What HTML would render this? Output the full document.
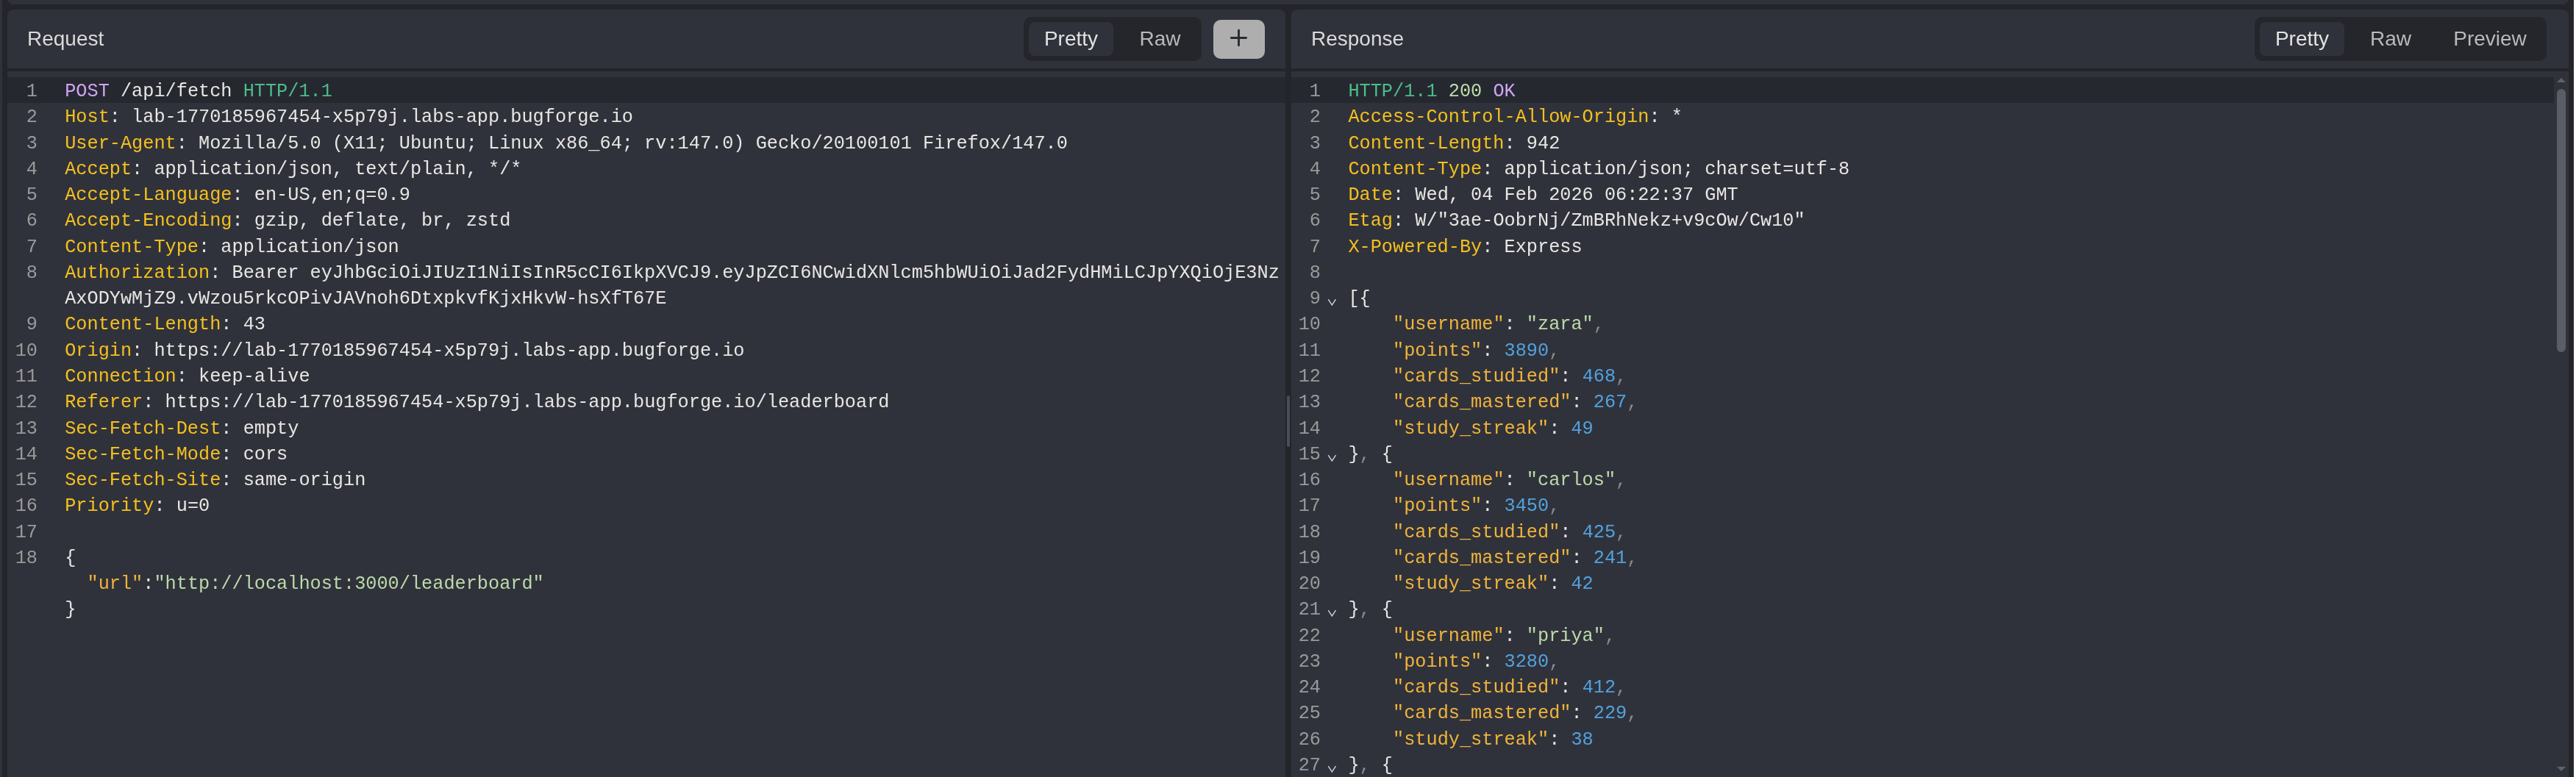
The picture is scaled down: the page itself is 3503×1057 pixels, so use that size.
<!DOCTYPE html>
<html><head><meta charset="utf-8"><style>
html,body{margin:0;padding:0}
body{-webkit-font-smoothing:antialiased;width:3503px;height:1057px;background:#24252a;position:relative;overflow:hidden;font-family:"Liberation Sans",sans-serif}
.a{position:absolute}
#lstrip{left:0;top:0;width:3px;height:1057px;background:#30323b}
#tstrip{left:10px;top:-20px;width:3483px;height:26px;background:#30323b;border-radius:8px}
#rwhite{left:3500px;top:0;width:3px;height:1057px;background:#fff}
.panel{position:absolute;top:13px;height:1200px;background:#30323b;border-radius:8px 8px 0 0;overflow:hidden}
#req{left:10px;width:1738px}
#res{left:1756px;width:1737px}
.sepl{position:absolute;left:0;right:0;top:80px;height:4px;background:#24252a}
.title{will-change:transform;position:absolute;top:19.75px;font-size:28px;line-height:40px;color:#d9d9d9;white-space:nowrap}
.tabs{position:absolute;top:10px;height:60px;background:#25262b;border-radius:10px}
.tab{will-change:transform;position:absolute;top:7px;height:46px;border-radius:8px;font-size:28px;line-height:46px;color:#b9b9b9;white-space:nowrap}
.tab.act{background:#30323b;color:#e2e2e2}
.plus{position:absolute;left:1640px;top:14px;width:70px;height:53px;background:#aeaeae;border-radius:10px}
.ln{will-change:transform;position:absolute;left:0;right:0;height:35.27px;line-height:35.27px;font-family:"Liberation Mono",monospace;font-size:25.26px;white-space:pre}
.hlbg{background:#262830}
#req .ln{right:0}
#res .ln{right:20px}
.num{position:absolute;left:0;top:2px;width:41px;text-align:right;color:#9a9a9a}
#res .num{width:40px}
.code{position:absolute;top:2px;left:78.2px}
#res .code{left:77.4px}
.fold{position:absolute;left:48px;top:18px}
.hn{color:#f4c01e} .v{color:#e8e6e3} .po{color:#cfa5f3} .ht{color:#4cbd8a}
.n2{color:#bfdcab} .ok{color:#d0a6f5} .k{color:#f0b43a} .s{color:#bcdaaa} .nu{color:#52a2de} .cm{color:#8a8a8a}
.sbthumb{position:absolute;left:1721px;top:108px;width:12px;height:358px;background:#5a5d66;border-radius:6px}
.tri{position:absolute;width:0;height:0;border-left:6.5px solid transparent;border-right:6.5px solid transparent}
</style></head><body>
<div class="a" id="lstrip"></div>
<div class="a" id="tstrip"></div>
<div class="a" id="rwhite"></div>
<div class="a" style="left:1750px;top:538px;width:4px;height:70px;border-radius:2px;background:#4a4d56"></div>
<div class="panel" id="req">
  <div class="title" style="left:27.4px">Request</div>
  <div class="tabs" style="left:1382px;width:242px">
    <div class="tab act" style="left:7px;width:115px;text-align:center">Pretty</div>
    <div class="tab" style="left:133px;width:105px;text-align:center">Raw</div>
  </div>
  <div class="plus"><svg width="70" height="53" viewBox="0 0 70 53"><path d="M34.5 14.2V34.8M24.3 24.5H44.6" stroke="#2a2b30" stroke-width="2.9" stroke-linecap="round" fill="none"/></svg></div>
  <div class="sepl"></div>
<div class="ln hlbg" style="top:92.00px"><span class="num">1</span><span class="code"><span class="po">POST</span><span class="v"> /api/fetch </span><span class="ht">HTTP/1.1</span></span></div>
<div class="ln" style="top:127.27px"><span class="num">2</span><span class="code"><span class="hn">Host</span><span class="v">: lab-1770185967454-x5p79j.labs-app.bugforge.io</span></span></div>
<div class="ln" style="top:162.54px"><span class="num">3</span><span class="code"><span class="hn">User-Agent</span><span class="v">: Mozilla/5.0 (X11; Ubuntu; Linux x86_64; rv:147.0) Gecko/20100101 Firefox/147.0</span></span></div>
<div class="ln" style="top:197.81px"><span class="num">4</span><span class="code"><span class="hn">Accept</span><span class="v">: application/json, text/plain, */*</span></span></div>
<div class="ln" style="top:233.08px"><span class="num">5</span><span class="code"><span class="hn">Accept-Language</span><span class="v">: en-US,en;q=0.9</span></span></div>
<div class="ln" style="top:268.35px"><span class="num">6</span><span class="code"><span class="hn">Accept-Encoding</span><span class="v">: gzip, deflate, br, zstd</span></span></div>
<div class="ln" style="top:303.62px"><span class="num">7</span><span class="code"><span class="hn">Content-Type</span><span class="v">: application/json</span></span></div>
<div class="ln" style="top:338.89px"><span class="num">8</span><span class="code"><span class="hn">Authorization</span><span class="v">: Bearer eyJhbGciOiJIUzI1NiIsInR5cCI6IkpXVCJ9.eyJpZCI6NCwidXNlcm5hbWUiOiJad2FydHMiLCJpYXQiOjE3Nz</span></span></div>
<div class="ln" style="top:374.16px"><span class="code"><span class="v">AxODYwMjZ9.vWzou5rkcOPivJAVnoh6DtxpkvfKjxHkvW-hsXfT67E</span></span></div>
<div class="ln" style="top:409.43px"><span class="num">9</span><span class="code"><span class="hn">Content-Length</span><span class="v">: 43</span></span></div>
<div class="ln" style="top:444.70px"><span class="num">10</span><span class="code"><span class="hn">Origin</span><span class="v">: https://lab-1770185967454-x5p79j.labs-app.bugforge.io</span></span></div>
<div class="ln" style="top:479.97px"><span class="num">11</span><span class="code"><span class="hn">Connection</span><span class="v">: keep-alive</span></span></div>
<div class="ln" style="top:515.24px"><span class="num">12</span><span class="code"><span class="hn">Referer</span><span class="v">: https://lab-1770185967454-x5p79j.labs-app.bugforge.io/leaderboard</span></span></div>
<div class="ln" style="top:550.51px"><span class="num">13</span><span class="code"><span class="hn">Sec-Fetch-Dest</span><span class="v">: empty</span></span></div>
<div class="ln" style="top:585.78px"><span class="num">14</span><span class="code"><span class="hn">Sec-Fetch-Mode</span><span class="v">: cors</span></span></div>
<div class="ln" style="top:621.05px"><span class="num">15</span><span class="code"><span class="hn">Sec-Fetch-Site</span><span class="v">: same-origin</span></span></div>
<div class="ln" style="top:656.32px"><span class="num">16</span><span class="code"><span class="hn">Priority</span><span class="v">: u=0</span></span></div>
<div class="ln" style="top:691.59px"><span class="num">17</span><span class="code"></span></div>
<div class="ln" style="top:726.86px"><span class="num">18</span><span class="code"><span class="v">{</span></span></div>
<div class="ln" style="top:762.13px"><span class="code"><span class="v">  </span><span class="k">"url"</span><span class="v">:</span><span class="s">"http://localhost:3000/leaderboard"</span></span></div>
<div class="ln" style="top:797.40px"><span class="code"><span class="v">}</span></span></div>
</div>
<div class="panel" id="res">
  <div class="title" style="left:27.4px">Response</div>
  <div class="tabs" style="left:1310px;width:397px">
    <div class="tab act" style="left:7px;width:115px;text-align:center">Pretty</div>
    <div class="tab" style="left:130px;width:110px;text-align:center">Raw</div>
    <div class="tab" style="left:245px;width:150px;text-align:center">Preview</div>
  </div>
  <div class="sepl"></div>
<div class="ln hlbg" style="top:92.00px"><span class="num">1</span><span class="code"><span class="ht">HTTP/1.1</span><span class="v"> </span><span class="n2">200</span><span class="v"> </span><span class="ok">OK</span></span></div>
<div class="ln" style="top:127.27px"><span class="num">2</span><span class="code"><span class="hn">Access-Control-Allow-Origin</span><span class="v">: *</span></span></div>
<div class="ln" style="top:162.54px"><span class="num">3</span><span class="code"><span class="hn">Content-Length</span><span class="v">: 942</span></span></div>
<div class="ln" style="top:197.81px"><span class="num">4</span><span class="code"><span class="hn">Content-Type</span><span class="v">: application/json; charset=utf-8</span></span></div>
<div class="ln" style="top:233.08px"><span class="num">5</span><span class="code"><span class="hn">Date</span><span class="v">: Wed, 04 Feb 2026 06:22:37 GMT</span></span></div>
<div class="ln" style="top:268.35px"><span class="num">6</span><span class="code"><span class="hn">Etag</span><span class="v">: W/"3ae-OobrNj/ZmBRhNekz+v9cOw/Cw10"</span></span></div>
<div class="ln" style="top:303.62px"><span class="num">7</span><span class="code"><span class="hn">X-Powered-By</span><span class="v">: Express</span></span></div>
<div class="ln" style="top:338.89px"><span class="num">8</span><span class="code"></span></div>
<div class="ln" style="top:374.16px"><span class="num">9</span><svg class="fold" width="15" height="12" viewBox="0 0 15 12"><polyline points="2.2,2.2 7.35,9.9 12.5,2.2" fill="none" stroke="#d2d2d2" stroke-width="1.4" stroke-linejoin="miter"/></svg><span class="code"><span class="v">[{</span></span></div>
<div class="ln" style="top:409.43px"><span class="num">10</span><span class="code"><span class="v">    </span><span class="k">"username"</span><span class="v">: </span><span class="s">"zara"</span><span class="cm">,</span></span></div>
<div class="ln" style="top:444.70px"><span class="num">11</span><span class="code"><span class="v">    </span><span class="k">"points"</span><span class="v">: </span><span class="nu">3890</span><span class="cm">,</span></span></div>
<div class="ln" style="top:479.97px"><span class="num">12</span><span class="code"><span class="v">    </span><span class="k">"cards_studied"</span><span class="v">: </span><span class="nu">468</span><span class="cm">,</span></span></div>
<div class="ln" style="top:515.24px"><span class="num">13</span><span class="code"><span class="v">    </span><span class="k">"cards_mastered"</span><span class="v">: </span><span class="nu">267</span><span class="cm">,</span></span></div>
<div class="ln" style="top:550.51px"><span class="num">14</span><span class="code"><span class="v">    </span><span class="k">"study_streak"</span><span class="v">: </span><span class="nu">49</span></span></div>
<div class="ln" style="top:585.78px"><span class="num">15</span><svg class="fold" width="15" height="12" viewBox="0 0 15 12"><polyline points="2.2,2.2 7.35,9.9 12.5,2.2" fill="none" stroke="#d2d2d2" stroke-width="1.4" stroke-linejoin="miter"/></svg><span class="code"><span class="v">}</span><span class="cm">,</span><span class="v"> {</span></span></div>
<div class="ln" style="top:621.05px"><span class="num">16</span><span class="code"><span class="v">    </span><span class="k">"username"</span><span class="v">: </span><span class="s">"carlos"</span><span class="cm">,</span></span></div>
<div class="ln" style="top:656.32px"><span class="num">17</span><span class="code"><span class="v">    </span><span class="k">"points"</span><span class="v">: </span><span class="nu">3450</span><span class="cm">,</span></span></div>
<div class="ln" style="top:691.59px"><span class="num">18</span><span class="code"><span class="v">    </span><span class="k">"cards_studied"</span><span class="v">: </span><span class="nu">425</span><span class="cm">,</span></span></div>
<div class="ln" style="top:726.86px"><span class="num">19</span><span class="code"><span class="v">    </span><span class="k">"cards_mastered"</span><span class="v">: </span><span class="nu">241</span><span class="cm">,</span></span></div>
<div class="ln" style="top:762.13px"><span class="num">20</span><span class="code"><span class="v">    </span><span class="k">"study_streak"</span><span class="v">: </span><span class="nu">42</span></span></div>
<div class="ln" style="top:797.40px"><span class="num">21</span><svg class="fold" width="15" height="12" viewBox="0 0 15 12"><polyline points="2.2,2.2 7.35,9.9 12.5,2.2" fill="none" stroke="#d2d2d2" stroke-width="1.4" stroke-linejoin="miter"/></svg><span class="code"><span class="v">}</span><span class="cm">,</span><span class="v"> {</span></span></div>
<div class="ln" style="top:832.67px"><span class="num">22</span><span class="code"><span class="v">    </span><span class="k">"username"</span><span class="v">: </span><span class="s">"priya"</span><span class="cm">,</span></span></div>
<div class="ln" style="top:867.94px"><span class="num">23</span><span class="code"><span class="v">    </span><span class="k">"points"</span><span class="v">: </span><span class="nu">3280</span><span class="cm">,</span></span></div>
<div class="ln" style="top:903.21px"><span class="num">24</span><span class="code"><span class="v">    </span><span class="k">"cards_studied"</span><span class="v">: </span><span class="nu">412</span><span class="cm">,</span></span></div>
<div class="ln" style="top:938.48px"><span class="num">25</span><span class="code"><span class="v">    </span><span class="k">"cards_mastered"</span><span class="v">: </span><span class="nu">229</span><span class="cm">,</span></span></div>
<div class="ln" style="top:973.75px"><span class="num">26</span><span class="code"><span class="v">    </span><span class="k">"study_streak"</span><span class="v">: </span><span class="nu">38</span></span></div>
<div class="ln" style="top:1009.02px"><span class="num">27</span><svg class="fold" width="15" height="12" viewBox="0 0 15 12"><polyline points="2.2,2.2 7.35,9.9 12.5,2.2" fill="none" stroke="#d2d2d2" stroke-width="1.4" stroke-linejoin="miter"/></svg><span class="code"><span class="v">}</span><span class="cm">,</span><span class="v"> {</span></span></div>
  <div class="tri" style="left:1720.5px;top:92.8px;border-bottom:6.3px solid #5f6269"></div>
  <div class="sbthumb"></div>
  <div class="tri" style="left:1720.5px;top:1030px;border-top:6.2px solid #5f6269"></div>
</div>
</body></html>
